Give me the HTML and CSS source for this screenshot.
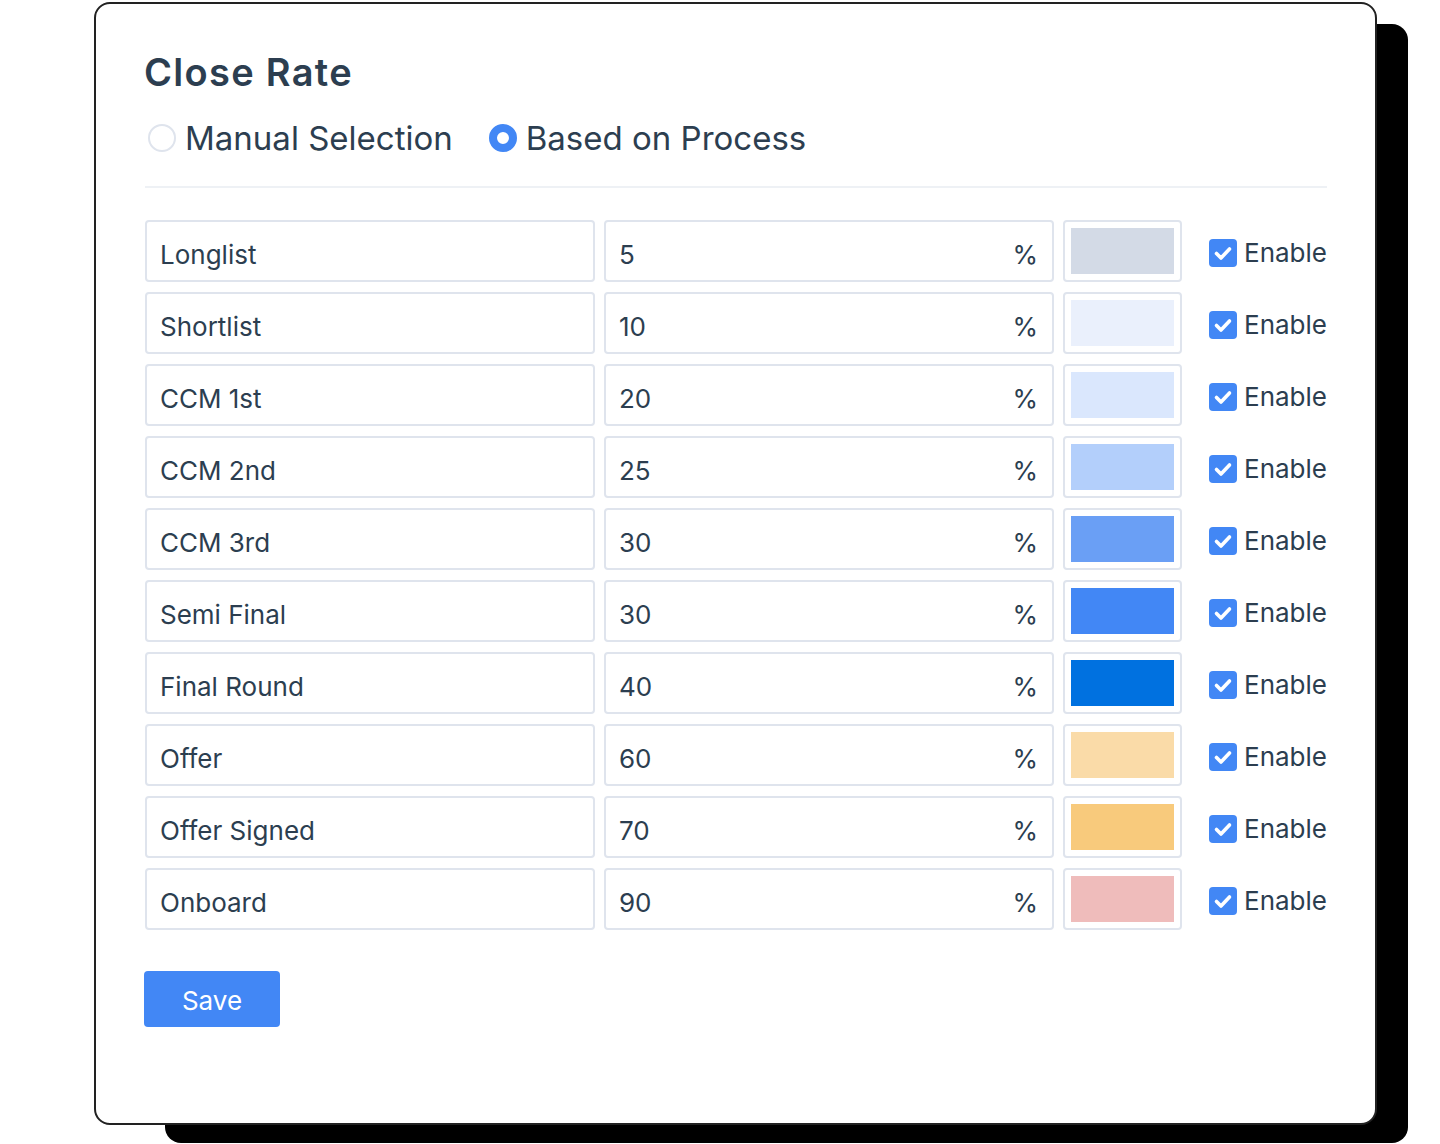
FILE: index.html
```html
<!DOCTYPE html>
<html lang="en">
<head>
<meta charset="utf-8">
<title>Close Rate</title>
<link rel="stylesheet" href="styles.css">
</head>
<body>
<div class="page">
  <div class="card">
    <h1 class="title">Close Rate</h1>
    <div class="radios">
      <label class="radio"><span class="radio-dot"></span><span>Manual Selection</span></label>
      <label class="radio"><span class="radio-dot is-checked"></span><span>Based on Process</span></label>
    </div>
    <div class="divider"></div>
    <div class="rows">
      <div class="row"><div class="field">Longlist</div><div class="field field-pct"><span>5</span><span>%</span></div><div class="swatch"><span class="swatch-fill c1"></span></div><div class="enable"><span class="check"><svg viewBox="0 0 28 28" width="28" height="28"><path d="M7.5 14.5l4.5 4.5 8.5-9" fill="none" stroke="#fff" stroke-width="3.6" stroke-linecap="round" stroke-linejoin="round"/></svg></span><span>Enable</span></div></div>
      <div class="row"><div class="field">Shortlist</div><div class="field field-pct"><span>10</span><span>%</span></div><div class="swatch"><span class="swatch-fill c2"></span></div><div class="enable"><span class="check"><svg viewBox="0 0 28 28" width="28" height="28"><path d="M7.5 14.5l4.5 4.5 8.5-9" fill="none" stroke="#fff" stroke-width="3.6" stroke-linecap="round" stroke-linejoin="round"/></svg></span><span>Enable</span></div></div>
      <div class="row"><div class="field">CCM 1st</div><div class="field field-pct"><span>20</span><span>%</span></div><div class="swatch"><span class="swatch-fill c3"></span></div><div class="enable"><span class="check"><svg viewBox="0 0 28 28" width="28" height="28"><path d="M7.5 14.5l4.5 4.5 8.5-9" fill="none" stroke="#fff" stroke-width="3.6" stroke-linecap="round" stroke-linejoin="round"/></svg></span><span>Enable</span></div></div>
      <div class="row"><div class="field">CCM 2nd</div><div class="field field-pct"><span>25</span><span>%</span></div><div class="swatch"><span class="swatch-fill c4"></span></div><div class="enable"><span class="check"><svg viewBox="0 0 28 28" width="28" height="28"><path d="M7.5 14.5l4.5 4.5 8.5-9" fill="none" stroke="#fff" stroke-width="3.6" stroke-linecap="round" stroke-linejoin="round"/></svg></span><span>Enable</span></div></div>
      <div class="row"><div class="field">CCM 3rd</div><div class="field field-pct"><span>30</span><span>%</span></div><div class="swatch"><span class="swatch-fill c5"></span></div><div class="enable"><span class="check"><svg viewBox="0 0 28 28" width="28" height="28"><path d="M7.5 14.5l4.5 4.5 8.5-9" fill="none" stroke="#fff" stroke-width="3.6" stroke-linecap="round" stroke-linejoin="round"/></svg></span><span>Enable</span></div></div>
      <div class="row"><div class="field">Semi Final</div><div class="field field-pct"><span>30</span><span>%</span></div><div class="swatch"><span class="swatch-fill c6"></span></div><div class="enable"><span class="check"><svg viewBox="0 0 28 28" width="28" height="28"><path d="M7.5 14.5l4.5 4.5 8.5-9" fill="none" stroke="#fff" stroke-width="3.6" stroke-linecap="round" stroke-linejoin="round"/></svg></span><span>Enable</span></div></div>
      <div class="row"><div class="field">Final Round</div><div class="field field-pct"><span>40</span><span>%</span></div><div class="swatch"><span class="swatch-fill c7"></span></div><div class="enable"><span class="check"><svg viewBox="0 0 28 28" width="28" height="28"><path d="M7.5 14.5l4.5 4.5 8.5-9" fill="none" stroke="#fff" stroke-width="3.6" stroke-linecap="round" stroke-linejoin="round"/></svg></span><span>Enable</span></div></div>
      <div class="row"><div class="field">Offer</div><div class="field field-pct"><span>60</span><span>%</span></div><div class="swatch"><span class="swatch-fill c8"></span></div><div class="enable"><span class="check"><svg viewBox="0 0 28 28" width="28" height="28"><path d="M7.5 14.5l4.5 4.5 8.5-9" fill="none" stroke="#fff" stroke-width="3.6" stroke-linecap="round" stroke-linejoin="round"/></svg></span><span>Enable</span></div></div>
      <div class="row"><div class="field">Offer Signed</div><div class="field field-pct"><span>70</span><span>%</span></div><div class="swatch"><span class="swatch-fill c9"></span></div><div class="enable"><span class="check"><svg viewBox="0 0 28 28" width="28" height="28"><path d="M7.5 14.5l4.5 4.5 8.5-9" fill="none" stroke="#fff" stroke-width="3.6" stroke-linecap="round" stroke-linejoin="round"/></svg></span><span>Enable</span></div></div>
      <div class="row"><div class="field">Onboard</div><div class="field field-pct"><span>90</span><span>%</span></div><div class="swatch"><span class="swatch-fill c10"></span></div><div class="enable"><span class="check"><svg viewBox="0 0 28 28" width="28" height="28"><path d="M7.5 14.5l4.5 4.5 8.5-9" fill="none" stroke="#fff" stroke-width="3.6" stroke-linecap="round" stroke-linejoin="round"/></svg></span><span>Enable</span></div></div>
    </div>
    <button class="save" type="button">Save</button>
  </div>
</div>
</body>
</html>
```

FILE: styles.css
```css
html, body {
  margin: 0;
  padding: 0;
  background: #fff;
}
body {
  font-family: Inter, "Noto Sans", "Liberation Sans", sans-serif;
  color: #2c3e50;
}
.page {
  position: relative;
  width: 1440px;
  height: 1144px;
  padding: 2px 0 0 94px;
  box-sizing: border-box;
  overflow: hidden;
}
.page::before {
  content: "";
  position: absolute;
  left: 165px;
  top: 24px;
  width: 1243px;
  height: 1119px;
  background: #000;
  border-radius: 16px;
  z-index: 0;
}
.card {
  position: relative;
  z-index: 1;
  width: 1283px;
  height: 1123px;
  box-sizing: border-box;
  background: #fff;
  border: 2px solid #222;
  border-radius: 16px;
  padding: 42px 48px 0 49px;
}
.title {
  margin: 0;
  font-size: 38px;
  font-weight: 600;
  letter-spacing: 1.3px;
  line-height: 52px;
  color: #2c3e50;
  margin-left: -1px;
}
.radios {
  display: flex;
  gap: 36px;
  margin-top: 18px;
  padding-left: 3px;
}
.radio {
  display: flex;
  align-items: center;
  gap: 9px;
  font-size: 33px;
  line-height: 44px;
}
.radio-dot {
  width: 28px;
  height: 28px;
  box-sizing: border-box;
  border-radius: 50%;
  border: 2px solid #dfe4ed;
  background: #fff;
}
.radio-dot.is-checked {
  border: 8px solid #4287f5;
}
.divider {
  height: 2px;
  background: #eef1f5;
  margin-top: 26px;
  margin-bottom: 32px;
}
.rows {
  display: flex;
  flex-direction: column;
  gap: 10px;
}
.row {
  display: grid;
  grid-template-columns: 450px 450px 119px 1fr;
  column-gap: 9px;
  height: 62px;
}
.field {
  box-sizing: border-box;
  border: 2px solid #dfe4ed;
  border-radius: 4px;
  display: flex;
  align-items: center;
  padding: 7px 14px 0 13px;
  font-size: 26px;
}
.field-pct {
  justify-content: space-between;
  padding-right: 14px;
}
.swatch {
  box-sizing: border-box;
  border: 2px solid #dfe4ed;
  border-radius: 4px;
  padding: 6px;
  display: flex;
}
.swatch-fill {
  flex: 1;
}
.c1 { background: #d3dae6; }
.c2 { background: #eaf0fc; }
.c3 { background: #dae7fd; }
.c4 { background: #b3cffb; }
.c5 { background: #6a9ff5; }
.c6 { background: #4287f5; }
.c7 { background: #0071e0; }
.c8 { background: #fadba8; }
.c9 { background: #f8ca7c; }
.c10 { background: #efbcbb; }
.enable {
  display: flex;
  align-items: center;
  justify-content: flex-end;
  gap: 7px;
  font-size: 26px;
  padding-top: 3px;
}
.check {
  width: 28px;
  height: 28px;
  border-radius: 4px;
  background: #4287f5;
  display: flex;
}
.save {
  margin-top: 41px;
  margin-left: -1px;
  width: 136px;
  height: 56px;
  border: none;
  border-radius: 4px;
  background: #4287f5;
  color: #fff;
  font-family: inherit;
  font-size: 26px;
  padding: 2px 0 0;
}
```
